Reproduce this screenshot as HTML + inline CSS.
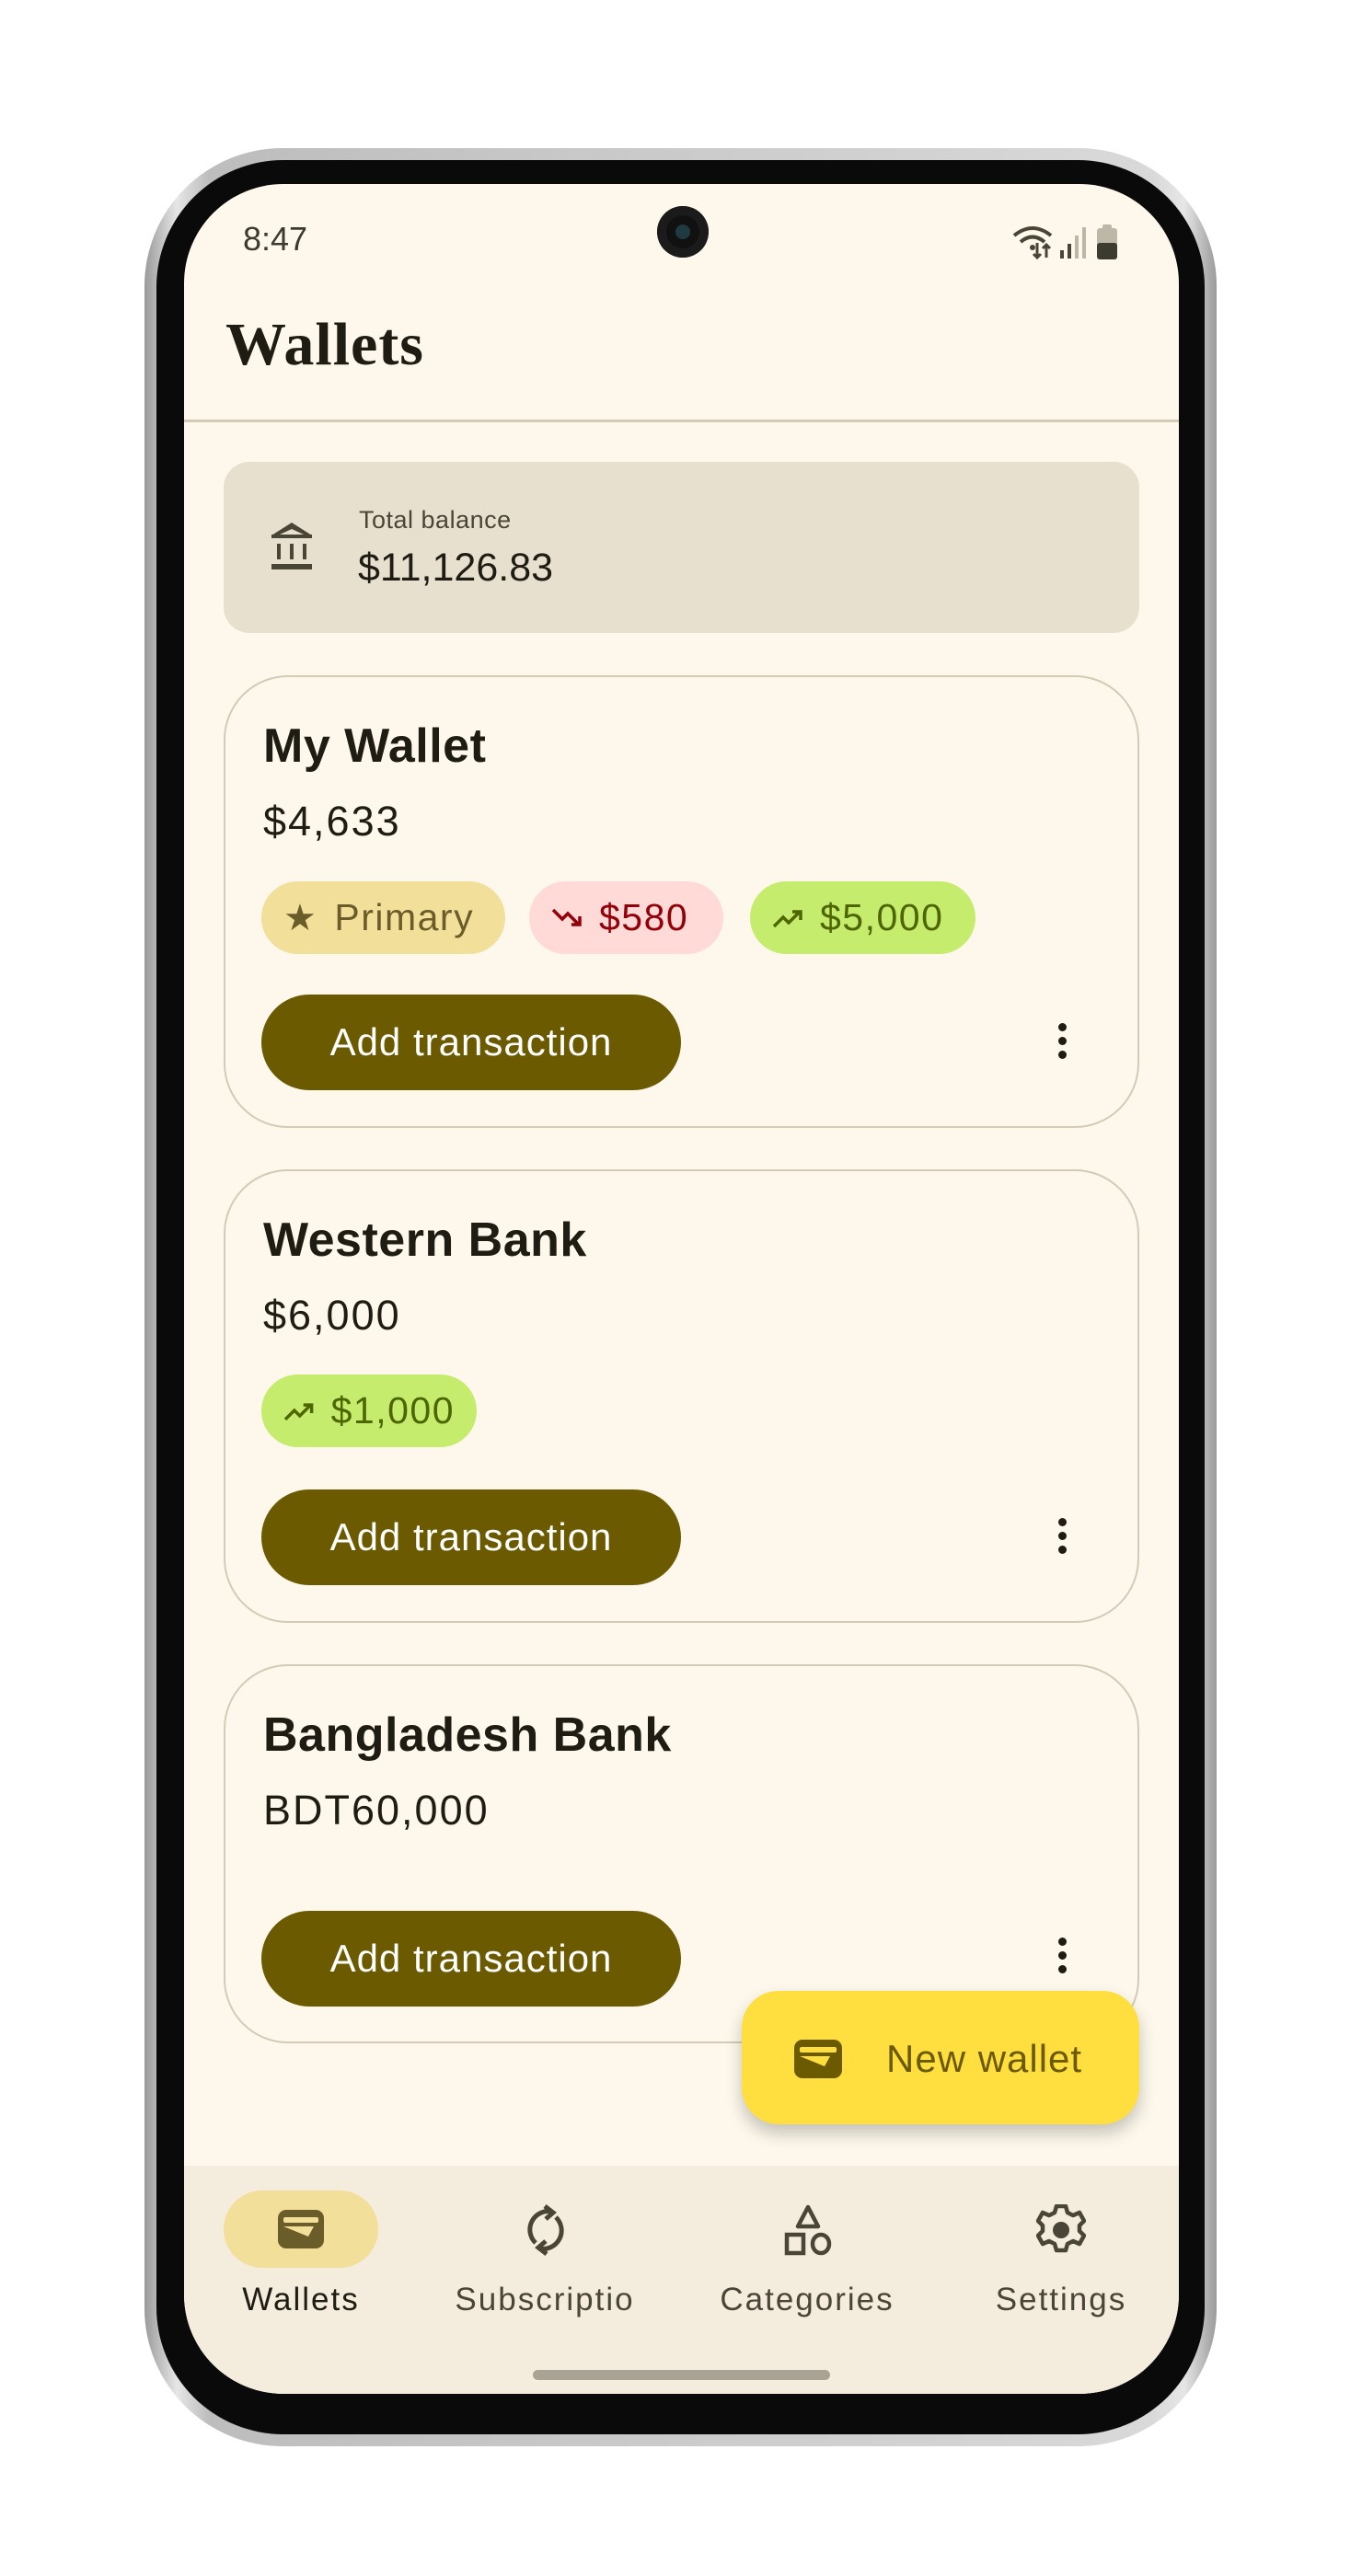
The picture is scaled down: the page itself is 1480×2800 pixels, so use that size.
<!DOCTYPE html>
<html><head><meta charset="utf-8"><style>
*{margin:0;padding:0;box-sizing:border-box}
body{width:1480px;height:2800px;background:#fff;position:relative;overflow:hidden;font-family:"Liberation Sans",sans-serif;color:#1e1c13}
.a{position:absolute}
.frame{left:157px;top:161px;width:1165px;height:2498px;border-radius:150px;background:linear-gradient(90deg,#9a9a9a,#e6e6e6 3%,#bdbdbd 6%,#d9d9d9 94%,#e6e6e6 97%,#9a9a9a);}
.bezel{left:170px;top:174px;width:1139px;height:2472px;border-radius:138px;background:#0a0a0a}
.screen{left:200px;top:200px;width:1081px;height:2402px;border-radius:108px;background:#fdf8eb;overflow:hidden}
.t{white-space:nowrap;line-height:1}
.card{border:2.5px solid #d3cbb5;border-radius:70px;left:43px;width:995px}
.h{font-weight:bold;font-size:52px;left:86px;letter-spacing:0.5px}
.amt{font-size:45px;left:86px;color:#1e1c13;letter-spacing:2px}
.chip{height:79px;border-radius:40px;font-size:41px;display:flex;align-items:center;gap:18px;padding:0 24px;letter-spacing:1.5px}
.btn{left:84px;width:456px;height:104px;border-radius:52px;background:#6b5a00;color:#fff;font-size:42px;display:flex;align-items:center;justify-content:center;letter-spacing:1px}
.keb{width:8px}
.keb i{display:block;width:9px;height:9px;border-radius:50%;background:#1e1c13;margin-bottom:6px}
.nl{font-size:35px;color:#4a4637;transform:translateX(-50%);letter-spacing:2px}
</style></head><body>
<div class="a frame"></div>
<div class="a bezel"></div>
<div class="a screen">
  <div class="a t" style="left:64px;top:42px;font-size:36px;color:#3d3a30">8:47</div>
  <div class="a" style="left:514px;top:24px;width:56px;height:56px;border-radius:50%;background:#111;box-shadow:inset 0 0 0 10px #1b1b1b"><div style="margin:20px;width:16px;height:16px;border-radius:50%;background:#1f3a40"></div></div>
  <svg class="a" style="left:900px;top:42px" width="150" height="42" viewBox="0 0 150 42">
    <path d="M2 14 Q22 -2 42 14" stroke="#4a4637" stroke-width="4" fill="none"/><path d="M9 21 Q22 10 35 21" stroke="#4a4637" stroke-width="4" fill="none"/><circle cx="22" cy="27" r="3" fill="#4a4637"/>
    <path d="M27 22v16M23 34l4 4 4-4M37 38V24M33 28l4-4 4 4" stroke="#4a4637" stroke-width="3" fill="none"/>
    <rect x="52" y="30" width="4" height="9" fill="#4a4637"/><rect x="60" y="23" width="4" height="16" fill="#4a4637"/><rect x="68" y="14" width="4" height="25" fill="#bdb7a8"/><rect x="76" y="5" width="4" height="34" fill="#bdb7a8"/>
    <rect x="92" y="6" width="22" height="34" rx="3" fill="#bdb7a8"/><rect x="98" y="2" width="10" height="6" rx="2" fill="#bdb7a8"/><rect x="92" y="22" width="22" height="18" rx="3" fill="#3d3a30"/>
  </svg>
  <div class="a t" style="left:45px;top:142px;font-family:'Liberation Serif',serif;font-weight:bold;font-size:66px;letter-spacing:1px">Wallets</div>
  <div class="a" style="left:0;top:256px;width:1081px;height:3px;background:#d3cbb5"></div>

  <div class="a" style="left:43px;top:302px;width:995px;height:186px;border-radius:28px;background:#e8e0cf"></div>
  <svg class="a" style="left:92px;top:366px" width="50" height="54" viewBox="0 0 50 54"><path d="M25 2 L47 16 H3 Z" fill="#4a4637"/><path d="M25 9 L38 15 H12 Z" fill="#e8e0cf"/><rect x="3" y="15" width="44" height="4" fill="#4a4637"/><rect x="9" y="25" width="4" height="17" fill="#4a4637"/><rect x="23" y="25" width="4" height="17" fill="#4a4637"/><rect x="37" y="25" width="4" height="17" fill="#4a4637"/><rect x="3" y="47" width="44" height="6" fill="#4a4637"/></svg>
  <div class="a t" style="left:190px;top:352px;font-size:27px;color:#4a4637;letter-spacing:0.5px">Total balance</div>
  <div class="a t" style="left:189px;top:396px;font-size:43px">$11,126.83</div>

  <!-- card 1 -->
  <div class="a card" style="top:534px;height:492px"></div>
  <div class="a t h" style="top:585px">My Wallet</div>
  <div class="a t amt" style="top:670px">$4,633</div>
  <div class="a chip" style="left:84px;top:758px;width:265px;background:#f1df9a;color:#6b5d2a"><span style="font-size:40px">★</span><span>Primary</span></div>
  <div class="a chip" style="left:375px;top:758px;width:211px;background:#ffdad7;color:#93000a"><svg width="34" height="26" viewBox="0 0 34 26"><path d="M2 4l10 10 6-6 12 12M22 20h9v-9" stroke="#93000a" stroke-width="3.5" fill="none"/></svg><span>$580</span></div>
  <div class="a chip" style="left:615px;top:758px;width:245px;background:#c6ec6e;color:#4d6600"><svg width="34" height="26" viewBox="0 0 34 26"><path d="M2 22l10-10 6 6 12-12M22 6h9v9" stroke="#4d6600" stroke-width="3.5" fill="none"/></svg><span>$5,000</span></div>
  <div class="a btn" style="top:881px">Add transaction</div>
  <div class="a keb" style="left:950px;top:912px"><i></i><i></i><i></i></div>

  <!-- card 2 -->
  <div class="a card" style="top:1071px;height:493px"></div>
  <div class="a t h" style="top:1122px">Western Bank</div>
  <div class="a t amt" style="top:1207px">$6,000</div>
  <div class="a chip" style="left:84px;top:1294px;width:234px;background:#c6ec6e;color:#4d6600"><svg width="34" height="26" viewBox="0 0 34 26"><path d="M2 22l10-10 6 6 12-12M22 6h9v9" stroke="#4d6600" stroke-width="3.5" fill="none"/></svg><span>$1,000</span></div>
  <div class="a btn" style="top:1419px">Add transaction</div>
  <div class="a keb" style="left:950px;top:1450px"><i></i><i></i><i></i></div>

  <!-- card 3 -->
  <div class="a card" style="top:1609px;height:412px"></div>
  <div class="a t h" style="top:1660px">Bangladesh Bank</div>
  <div class="a t amt" style="top:1745px">BDT60,000</div>
  <div class="a btn" style="top:1877px">Add transaction</div>
  <div class="a keb" style="left:950px;top:1906px"><i></i><i></i><i></i></div>

  <!-- FAB -->
  <div class="a" style="left:606px;top:1964px;width:432px;height:145px;border-radius:40px;background:#ffdf3f;box-shadow:0 10px 18px rgba(0,0,0,0.22)"></div>
  <svg class="a" style="left:662px;top:2016px" width="54" height="44" viewBox="0 0 54 44"><rect x="1" y="1" width="52" height="42" rx="9" fill="#6b5a00"/><rect x="7" y="9" width="40" height="6" rx="2" fill="#ffdf3f"/><path d="M7 19 L40 19 L34 30 Z" fill="#ffdf3f"/></svg>
  <div class="a t" style="left:763px;top:2017px;font-size:42px;color:#6b5a00;letter-spacing:1px">New wallet</div>

  <!-- nav -->
  <div class="a" style="left:0;top:2154px;width:1081px;height:248px;background:#f4ecdc"></div>
  <div class="a" style="left:43px;top:2181px;width:168px;height:84px;border-radius:42px;background:#f1df9a"></div>
  <svg class="a" style="left:101px;top:2201px" width="52" height="44" viewBox="0 0 52 44"><rect x="1" y="1" width="50" height="42" rx="9" fill="#6b5d2a"/><rect x="7" y="9" width="38" height="6" rx="2" fill="#f1df9a"/><path d="M7 19 L40 19 L34 30 Z" fill="#f1df9a"/></svg>
  <svg class="a" style="left:372px;top:2196px" width="42" height="56" viewBox="0 0 42 56"><path d="M28 8 A20 20 0 0 0 10 42" stroke="#4a4637" stroke-width="5" fill="none"/><path d="M20 2l9 7-8 7" stroke="#4a4637" stroke-width="5" fill="none"/><path d="M14 48 A20 20 0 0 0 32 14" stroke="#4a4637" stroke-width="5" fill="none"/><path d="M22 54l-9-7 8-7" stroke="#4a4637" stroke-width="5" fill="none"/></svg>
  <svg class="a" style="left:652px;top:2196px" width="52" height="56" viewBox="0 0 52 56"><path d="M26 3 L37 24 H15 Z" stroke="#4a4637" stroke-width="4.5" fill="none" stroke-linejoin="round"/><rect x="3" y="33" width="18" height="20" stroke="#4a4637" stroke-width="4.5" fill="none"/><ellipse cx="40" cy="43" rx="9" ry="10" stroke="#4a4637" stroke-width="4.5" fill="none"/></svg>
  <svg class="a" style="left:926px;top:2196px" width="54" height="56" viewBox="0 0 54 56"><g transform="translate(27 28)"><path d="M-5 -26h10l2 7 6 3 7-3 5 9-5 5v6l5 5-5 9-7-3-6 3-2 7h-10l-2-7-6-3-7 3-5-9 5-5v-6l-5-5 5-9 7 3 6-3z" stroke="#4a4637" stroke-width="4.5" fill="none" stroke-linejoin="round"/><circle r="9" fill="#4a4637"/></g></svg>
  <div class="a t nl" style="left:127px;top:2282px;color:#1e1c13">Wallets</div>
  <div class="a t nl" style="left:392px;top:2282px">Subscriptio</div>
  <div class="a t nl" style="left:677px;top:2282px">Categories</div>
  <div class="a t nl" style="left:953px;top:2282px">Settings</div>
  <div class="a" style="left:379px;top:2376px;width:323px;height:11px;border-radius:6px;background:#a9a396"></div>
</div>
</body></html>
